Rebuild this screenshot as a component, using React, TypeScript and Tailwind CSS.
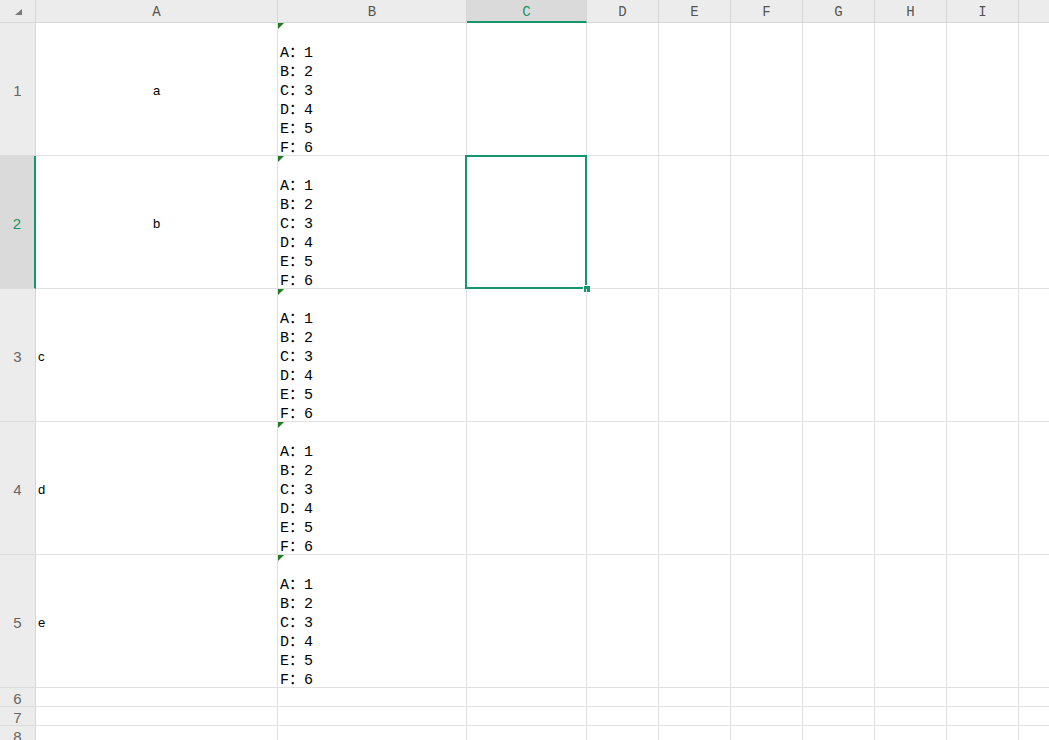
import React from "react";

// The last column sits past the right edge, so only its left part shows.
const columns: { key: string; label: string }[] = [
  { key: "A", label: "A" },
  { key: "B", label: "B" },
  { key: "C", label: "C" },
  { key: "D", label: "D" },
  { key: "E", label: "E" },
  { key: "F", label: "F" },
  { key: "G", label: "G" },
  { key: "H", label: "H" },
  { key: "I", label: "I" },
  { key: "J", label: "" },
];

const optionLines = ["A：1", "B：2", "C：3", "D：4", "E：5", "F：6"];

type Row = { n: number; tall: boolean; a?: string; centered?: boolean };

const rows: Row[] = [
  { n: 1, tall: true, a: "a", centered: true },
  { n: 2, tall: true, a: "b", centered: true },
  { n: 3, tall: true, a: "c" },
  { n: 4, tall: true, a: "d" },
  { n: 5, tall: true, a: "e" },
  { n: 6, tall: false },
  { n: 7, tall: false },
  { n: 8, tall: false },
];

function CommentMark() {
  return (
    <svg className="absolute left-0 top-0" width="6" height="6" viewBox="0 0 6 6">
      <polygon points="0,0 6,0 0,6" fill="#1e7b1e" />
    </svg>
  );
}

function ColumnHeader({ label, active }: { label: string; active: boolean }) {
  return (
    <div
      className={
        active
          ? "flex items-center justify-center pt-[3px] bg-[#dadada] border-r border-r-[#d6d6d6] border-b-2 border-b-[#15966a] text-[#15966a] text-[14px] font-['Liberation_Mono',monospace]"
          : "flex items-center justify-center pt-[3px] bg-[#ececec] border-r border-b border-[#d6d6d6] text-[#555555] text-[14px] font-['Liberation_Mono',monospace]"
      }
    >
      {label}
    </div>
  );
}

function RowHeader({ n, active }: { n: number; active: boolean }) {
  return (
    <div
      className={
        active
          ? "flex items-center justify-center pt-[4px] bg-[#dadada] border-r-2 border-r-[#15966a] border-b border-b-[#dcdcdc] text-[#15966a] text-[15px] font-['Liberation_Sans',sans-serif]"
          : "flex items-center justify-center pt-[4px] bg-[#ececec] border-r border-r-[#d6d6d6] border-b border-b-[#dcdcdc] text-[#666666] text-[15px] font-['Liberation_Sans',sans-serif]"
      }
    >
      {n}
    </div>
  );
}

export default function App() {
  return (
    <div className="w-[1049px] h-[740px] overflow-hidden bg-white">
      <div className="grid grid-cols-[36px_242px_189px_120px_repeat(7,72px)] grid-rows-[23px_repeat(5,133px)_repeat(3,19px)] w-max">
        {/* corner */}
        <div className="bg-[#ececec] border-r border-b border-[#d6d6d6] pl-[15px] pt-[9px]">
          <svg width="7" height="7" viewBox="0 0 7 7">
            <polygon points="7,0 7,6 0,6" fill="#7a7a7a" />
          </svg>
        </div>
        {columns.map((c) => (
          <ColumnHeader key={c.key} label={c.label} active={c.key === "C"} />
        ))}

        {rows.map((r) => (
          <React.Fragment key={r.n}>
            <RowHeader n={r.n} active={r.n === 2} />
            {/* column A */}
            <div
              className={
                r.centered
                  ? "flex items-center justify-center pt-[4px] border-r border-b border-[#e1e1e1] text-[13px] text-black font-['Liberation_Sans',sans-serif]"
                  : "flex items-center pl-[2px] pt-[4px] border-r border-b border-[#e1e1e1] text-[13px] text-black font-['Liberation_Sans',sans-serif]"
              }
            >
              {r.a ?? ""}
            </div>
            {/* column B */}
            <div className="relative flex flex-col justify-end pl-[2px] border-r border-b border-[#e1e1e1] text-[15px] text-black font-['Liberation_Mono','Noto_Sans_CJK_SC',monospace] overflow-hidden">
              {r.tall && (
                <>
                  <CommentMark />
                  {optionLines.map((l) => (
                    <div key={l} className="h-[19px] pt-[6px] leading-[13px] whitespace-pre">
                      {l}
                    </div>
                  ))}
                </>
              )}
            </div>
            {/* column C */}
            <div className="relative border-r border-b border-[#e1e1e1]">
              {r.n === 2 && (
                <>
                  <div className="absolute -left-[2px] -top-[1px] w-[122px] h-[134px] border-2 border-[#15966a]" />
                  <div className="absolute left-[116px] top-[129px] w-[8px] h-[8px] bg-[#15966a] border border-white" />
                </>
              )}
            </div>
            {columns.slice(3).map((c) => (
              <div key={c.key} className="border-r border-b border-[#e1e1e1]" />
            ))}
          </React.Fragment>
        ))}
      </div>
    </div>
  );
}
